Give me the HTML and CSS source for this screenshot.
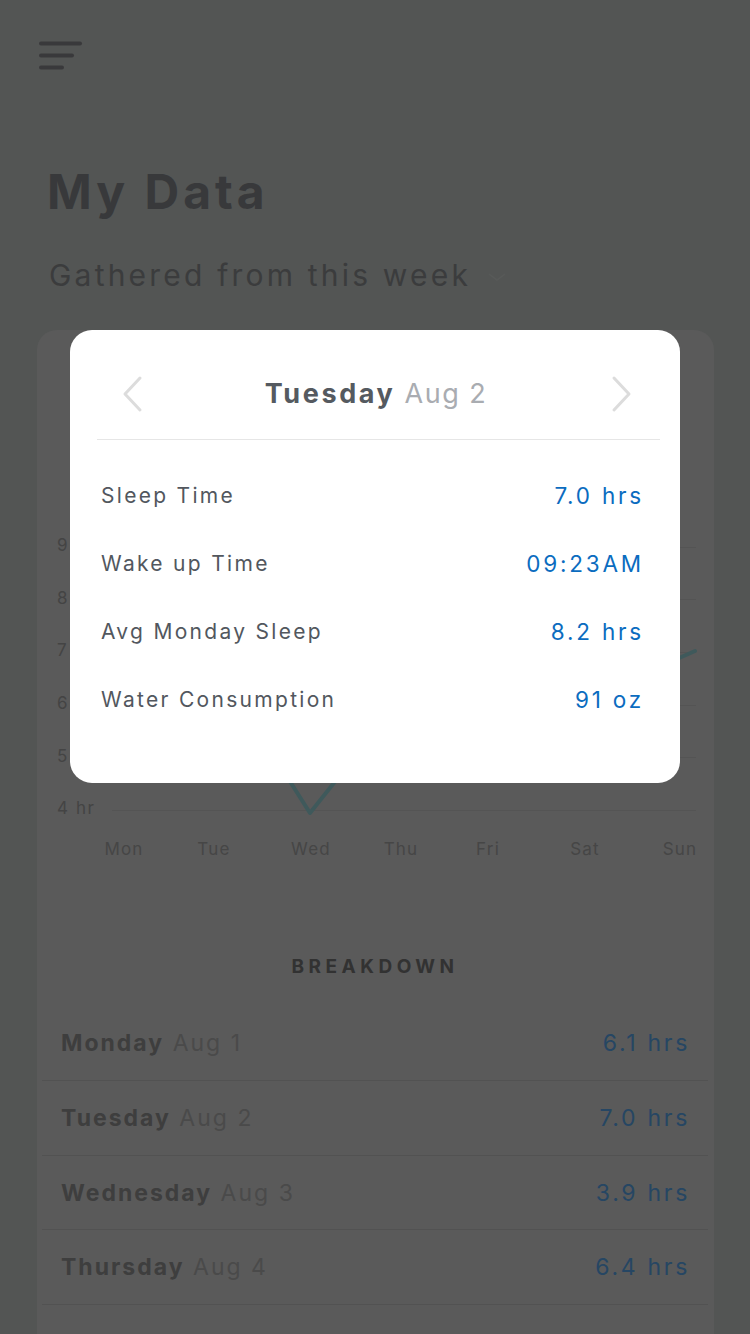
FILE: index.html
```html
<!DOCTYPE html>
<html lang="en">
<head>
<meta charset="utf-8">
<title>My Data</title>
<link rel="stylesheet" href="styles.css">
</head>
<body>
<div class="page">
  <header class="topbar">
    <svg class="menu-icon" width="46" height="30" viewBox="0 0 46 30">
      <line x1="2" y1="2.5" x2="41" y2="2.5"/>
      <line x1="2" y1="14.5" x2="33" y2="14.5"/>
      <line x1="2" y1="26.5" x2="23" y2="26.5"/>
    </svg>
  </header>

  <h1 class="title">My Data</h1>
  <div class="subtitle">
    <span>Gathered from this week</span>
    <svg class="sub-chevron" width="20" height="10" viewBox="0 0 20 10"><polyline points="2,2 10,8 18,2"/></svg>
  </div>

  <section class="card">
    <div class="chart">
      <div class="grid-row"><span class="ylabel">9 hr</span><span class="gline"></span></div>
      <div class="grid-row"><span class="ylabel">8 hr</span><span class="gline"></span></div>
      <div class="grid-row"><span class="ylabel">7 hr</span><span class="gline"></span></div>
      <div class="grid-row"><span class="ylabel">6 hr</span><span class="gline"></span></div>
      <div class="grid-row"><span class="ylabel">5 hr</span><span class="gline"></span></div>
      <div class="grid-row"><span class="ylabel">4 hr</span><span class="gline"></span></div>
      <div class="days">
        <span>Mon</span><span>Tue</span><span>Wed</span><span>Thu</span><span>Fri</span><span>Sat</span><span>Sun</span>
      </div>
      <svg class="plot" width="676" height="360" viewBox="0 0 676 360">
        <polyline points="86,179 176,139 273,292 363,179 450,199 547,179 658,130"/>
      </svg>
    </div>

    <h2 class="breakdown-title">BREAKDOWN</h2>
    <ul class="breakdown">
      <li><span class="day"><b>Monday</b> Aug 1</span><span class="hrs">6.1 hrs</span></li>
      <li><span class="day"><b>Tuesday</b> Aug 2</span><span class="hrs">7.0 hrs</span></li>
      <li><span class="day"><b>Wednesday</b> Aug 3</span><span class="hrs">3.9 hrs</span></li>
      <li><span class="day"><b>Thursday</b> Aug 4</span><span class="hrs">6.4 hrs</span></li>
    </ul>
  </section>
</div>

<div class="backdrop"></div>

<div class="modal">
  <div class="modal-head">
    <svg class="nav-chev" width="22" height="38" viewBox="0 0 22 38"><polyline points="18,3 3,19 18,35"/></svg>
    <div class="modal-date"><b>Tuesday</b> Aug 2</div>
    <svg class="nav-chev" width="22" height="38" viewBox="0 0 22 38"><polyline points="4,3 19,19 4,35"/></svg>
  </div>
  <div class="modal-rows">
    <div class="mrow"><span class="mlabel">Sleep Time</span><span class="mval">7.0 hrs</span></div>
    <div class="mrow"><span class="mlabel">Wake up Time</span><span class="mval">09:23AM</span></div>
    <div class="mrow"><span class="mlabel">Avg Monday Sleep</span><span class="mval">8.2 hrs</span></div>
    <div class="mrow"><span class="mlabel">Water Consumption</span><span class="mval">91 oz</span></div>
  </div>
</div>
</body>
</html>
```

FILE: styles.css
```css
* { box-sizing: border-box; }

html, body {
  margin: 0;
  padding: 0;
}

body {
  width: 750px;
  height: 1334px;
  overflow: hidden;
  background: #a6aaa8;
  font-family: Inter, "Noto Sans", sans-serif;
  position: relative;
}

.topbar {
  padding: 41px 0 0 39px;
  height: 100px;
}

.menu-icon line {
  stroke: #727276;
  stroke-width: 4;
  stroke-linecap: round;
}

.title {
  margin: 64px 0 0 47px;
  font-size: 48px;
  line-height: 56px;
  font-weight: 700;
  letter-spacing: 4px;
  color: #707276;
}

.subtitle {
  margin: 37px 0 0 49px;
  display: flex;
  align-items: center;
  gap: 16px;
  font-size: 30px;
  line-height: 36px;
  letter-spacing: 3.2px;
  color: #76787a;
  font-weight: 400;
}

.sub-chevron {
  margin-top: 4px;
}

.sub-chevron polyline {
  fill: none;
  stroke: #b0b4b2;
  stroke-width: 1.5;
}

.card {
  margin: 37px 0 0 37px;
  width: 677px;
  height: 1100px;
  background: #b4b4b4;
  border-radius: 20px;
  padding: 191px 6px 0 5px;
}

.chart {
  position: relative;
  padding-left: 15px;
  padding-right: 12px;
}

.grid-row {
  height: 52.6px;
  display: flex;
  align-items: center;
}

.ylabel {
  width: 55px;
  font-size: 17px;
  letter-spacing: 1.6px;
  color: #888;
  white-space: nowrap;
  overflow: hidden;
  padding-bottom: 4px;
}

.gline {
  flex: 1;
  height: 1px;
  background: #a9a9a9;
}

.days {
  display: grid;
  grid-template-columns: 90px 90px 104px 76px 98px 96px 94px;
  padding-left: 22px;
  margin-top: 2px;
  font-size: 17px;
  letter-spacing: 1.2px;
  color: #8c8c8c;
}

.days span {
  text-align: center;
}

.plot {
  position: absolute;
  left: -5px;
  top: 0;
}

.plot polyline {
  fill: none;
  stroke: #7eb2b6;
  stroke-width: 4;
  stroke-linejoin: round;
  stroke-linecap: round;
}

.breakdown-title {
  margin: 96px 0 0 0;
  text-align: center;
  font-size: 19px;
  line-height: 24px;
  font-weight: 700;
  letter-spacing: 4.5px;
  color: #646464;
}

.breakdown {
  list-style: none;
  margin: 28px 0 0 0;
  padding: 0;
}

.breakdown li {
  display: flex;
  justify-content: space-between;
  align-items: center;
  height: 74.6px;
  padding: 0 19px;
  border-bottom: 1px solid #a4a4a4;
  font-size: 23px;
  letter-spacing: 2px;
}

.day {
  color: #949494;
}

.day b {
  color: #7c7c7c;
  font-weight: 700;
}

.hrs {
  color: #4c8cc6;
  letter-spacing: 2.7px;
  margin-right: -1px;
}

.backdrop {
  position: fixed;
  inset: 0;
  background: rgba(0, 0, 0, 0.5);
}

.modal {
  position: fixed;
  left: 70px;
  top: 330px;
  width: 610px;
  height: 453px;
  background: #fff;
  border-radius: 22px;
  padding: 0 20px 0 27px;
}

.modal-head {
  height: 110px;
  display: flex;
  align-items: center;
  justify-content: space-between;
  padding: 18px 28px 0 25px;
  border-bottom: 1px solid #e6e6e6;
}

.nav-chev polyline {
  fill: none;
  stroke: #dcdcdc;
  stroke-width: 3;
  stroke-linecap: round;
  stroke-linejoin: round;
}

.modal-date {
  font-size: 27px;
  letter-spacing: 1.5px;
  color: #a9acb1;
  margin-right: 2px;
}

.modal-date b {
  color: #555a60;
  font-weight: 700;
  letter-spacing: 2.6px;
}

.modal-rows {
  padding: 21px 18px 0 4px;
}

.mrow {
  height: 68px;
  display: flex;
  align-items: center;
  justify-content: space-between;
}

.mlabel {
  font-size: 21px;
  letter-spacing: 2.3px;
  color: #52575e;
}

.mval {
  font-size: 22.5px;
  letter-spacing: 2.8px;
  color: #0b6cbf;
  margin-right: -2px;
}
```
